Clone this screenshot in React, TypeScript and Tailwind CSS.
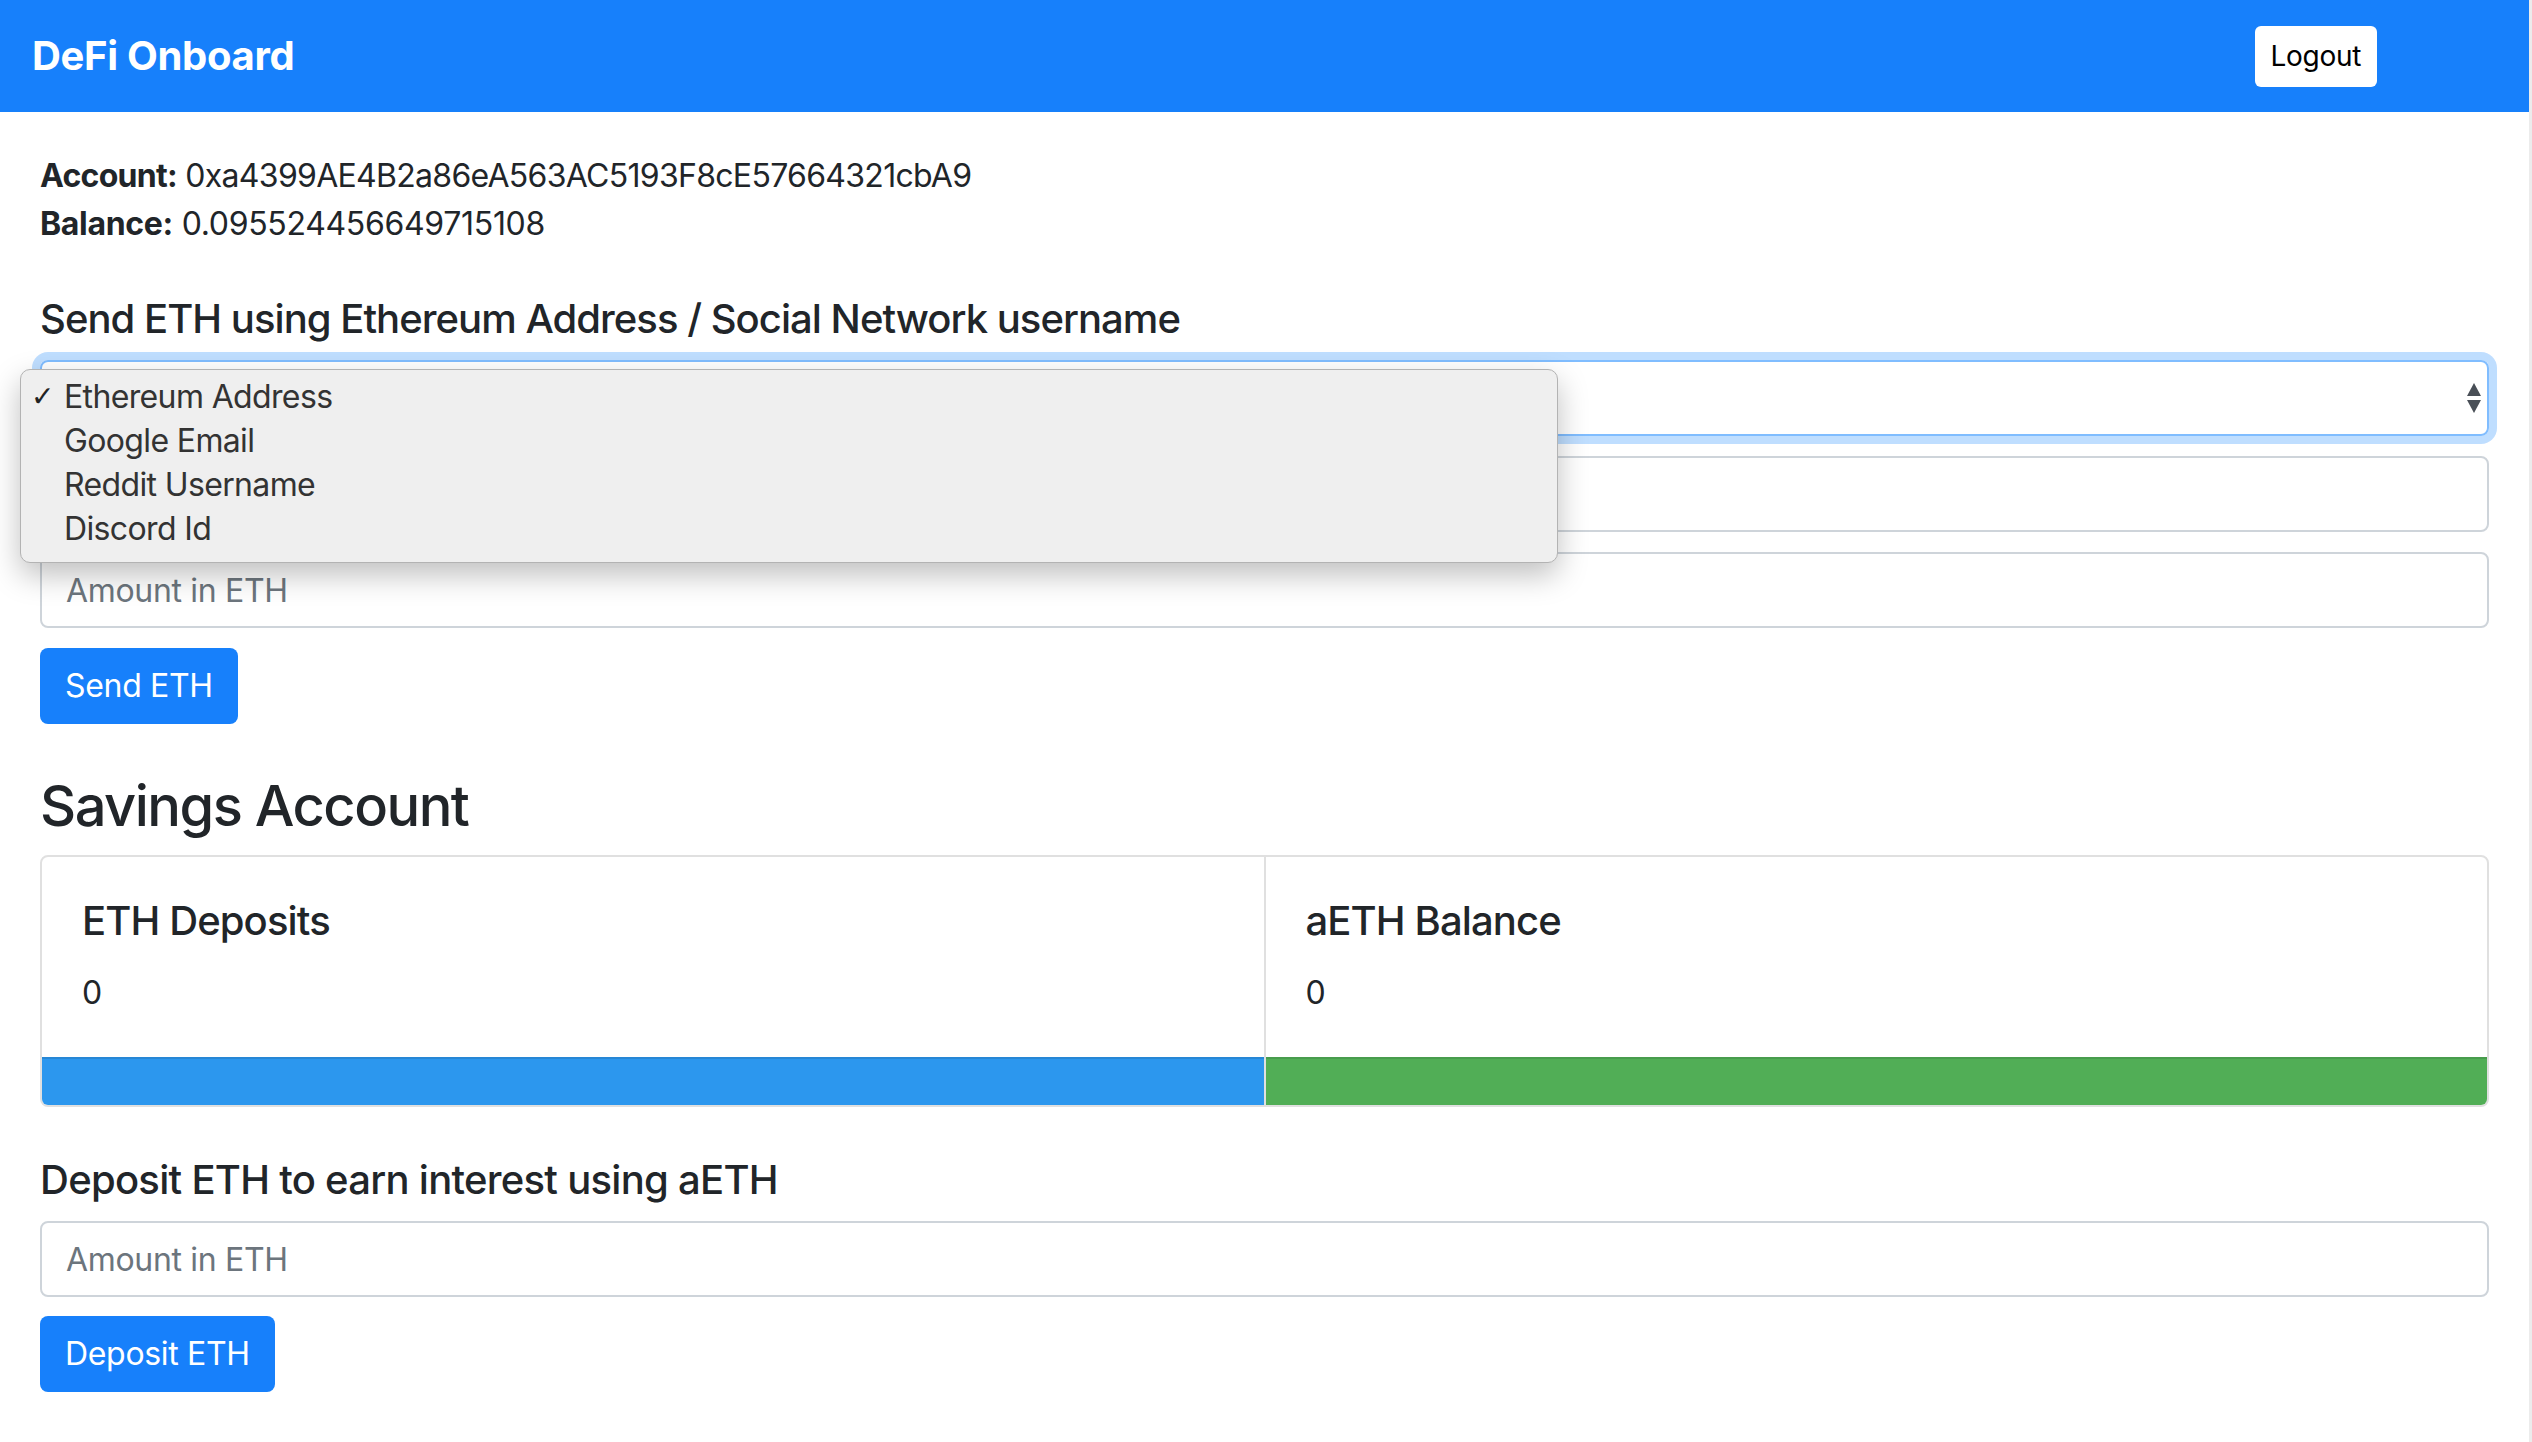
import React from "react";

function SelectArrows() {
  return (
    <svg width="14" height="30" viewBox="0 0 14 30" className="shrink-0">
      <polygon points="7,0 14,13 0,13" fill="#494f57" />
      <polygon points="0,17 14,17 7,30" fill="#494f57" />
    </svg>
  );
}

function StatCard({ title, value, bar, divider }: { title: string; value: string; bar: string; divider?: boolean }) {
  return (
    <div className={"flex flex-1 flex-col " + (divider ? "border-l-2 border-[#e0e0e0]" : "")}>
      <div className="p-[40px]">
        <div className="mb-[24px] text-[40px] font-medium leading-[48px] tracking-[-0.022em]">{title}</div>
        <div className="text-[32px] leading-[48px]">{value}</div>
      </div>
      <div className={"h-[48px] border-t-2 border-black/10 " + bar}></div>
    </div>
  );
}

export default function App() {
  const options = ["Ethereum Address", "Google Email", "Reddit Username", "Discord Id"];
  return (
    <div className="relative flex min-h-[1442px] bg-white font-[Inter,'Noto_Sans',sans-serif] tracking-[-0.02em] text-[#212529]">
      <div className="min-w-0 flex-1">
        <nav className="flex h-[112px] items-center justify-between bg-[#1780fb] pl-[32px] pr-[152px]">
          <span className="text-[40px] font-bold leading-[60px] text-white">DeFi Onboard</span>
          <button className="h-[61px] rounded-[6px] bg-white px-[16px] text-[28px] leading-[42px] text-black">Logout</button>
        </nav>

        <main className="px-[40px] pt-[40px] pb-[50px]">
          <div className="text-[32px] leading-[48px] tracking-[-0.022em]">
            <span className="font-bold">Account:</span> 0xa4399AE4B2a86eA563AC5193F8cE57664321cbA9
          </div>
          <div className="text-[32px] leading-[48px]">
            <span className="font-bold">Balance:</span> 0.095524456649715108
          </div>

          <h5 className="mt-[47px] text-[40px] font-medium leading-[48px] tracking-[-0.024em]">
            Send ETH using Ethereum Address / Social Network username
          </h5>

          <div className="mt-[17px] flex h-[76px] items-center rounded-[8px] border-2 border-[#80bdff] pl-[24px] pr-[6px] shadow-[0_0_0_8px_rgba(0,123,255,0.25)]">
            <span className="flex-1"></span>
            <SelectArrows />
          </div>

          <input
            className="mt-[20px] block h-[76px] w-full rounded-[8px] border-2 border-[#ced4da] px-[24px] text-[32px] outline-none placeholder:text-[#6c757d]"
            placeholder=""
          />
          <input
            className="mt-[20px] block h-[76px] w-full rounded-[8px] border-2 border-[#ced4da] px-[24px] text-[32px] outline-none placeholder:text-[#6c757d]"
            placeholder="Amount in ETH"
          />
          <button className="mt-[20px] h-[76px] rounded-[8px] bg-[#1780fb] px-[25px] text-[32px] leading-[48px] text-white">
            Send ETH
          </button>

          <h3 className="mt-[49px] text-[56px] font-medium leading-[67px] tracking-[-0.027em]">Savings Account</h3>

          <div className="mt-[15px] flex overflow-hidden rounded-[8px] border-2 border-[#e0e0e0]">
            <StatCard title="ETH Deposits" value="0" bar="bg-[#2c97ee]" />
            <StatCard title="aETH Balance" value="0" bar="bg-[#51ae56]" divider />
          </div>

          <h5 className="mt-[49px] text-[40px] font-medium leading-[48px] tracking-[-0.018em]">Deposit ETH to earn interest using aETH</h5>
          <input
            className="mt-[17px] block h-[76px] w-full rounded-[8px] border-2 border-[#ced4da] px-[24px] text-[32px] outline-none placeholder:text-[#6c757d]"
            placeholder="Amount in ETH"
          />
          <button className="mt-[19px] h-[76px] rounded-[8px] bg-[#1780fb] px-[25px] text-[32px] leading-[48px] text-white">
            Deposit ETH
          </button>
        </main>
      </div>
      <div className="w-[3px] bg-[#ececec]"></div>

      <div className="absolute left-[20px] top-[369px] h-[194px] w-[1538px] rounded-[10px] border border-[#b3b3b3] bg-[#efefef] pt-[5px] tracking-[-0.04em] shadow-[0_12px_30px_rgba(0,0,0,0.25)]">
        {options.map((o, i) => (
          <div key={o} className="flex h-[44px] items-center text-[32px] text-[#333]">
            <span className="w-[43px] pl-[10px] text-[28px] font-[DejaVu_Sans,sans-serif] text-[#222]">{i === 0 ? "✓" : ""}</span>
            <span>{o}</span>
          </div>
        ))}
      </div>
    </div>
  );
}
